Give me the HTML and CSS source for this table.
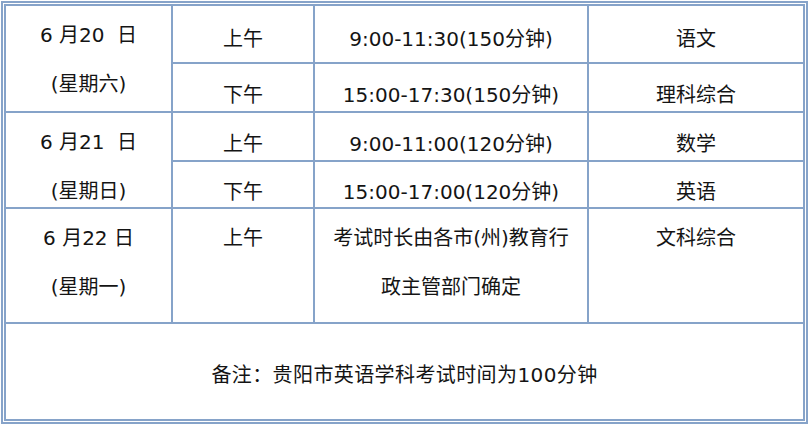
FILE: index.html
```html
<!DOCTYPE html>
<html lang="zh-CN">
<head>
<meta charset="utf-8">
<title>考试时间安排</title>
<link rel="stylesheet" href="styles.css">
</head>
<body>
<div class="frame">
  <div class="grid">
    <div class="cell stack span2"><div>6 月20&nbsp; 日</div><div>(星期六)</div></div>
    <div class="cell mid first">上午</div>
    <div class="cell mid first">9:00-11:30(150分钟)</div>
    <div class="cell mid first">语文</div>
    <div class="cell mid">下午</div>
    <div class="cell mid">15:00-17:30(150分钟)</div>
    <div class="cell mid">理科综合</div>

    <div class="cell stack span2"><div>6 月21&nbsp; 日</div><div>(星期日)</div></div>
    <div class="cell mid">上午</div>
    <div class="cell mid">9:00-11:00(120分钟)</div>
    <div class="cell mid">数学</div>
    <div class="cell mid">下午</div>
    <div class="cell mid">15:00-17:00(120分钟)</div>
    <div class="cell mid">英语</div>

    <div class="cell stack"><div>6 月22 日</div><div>(星期一)</div></div>
    <div class="cell stack"><div>上午</div></div>
    <div class="cell stack"><div>考试时长由各市(州)教育行</div><div>政主管部门确定</div></div>
    <div class="cell stack"><div>文科综合</div></div>

    <div class="cell note">备注：贵阳市英语学科考试时间为100分钟</div>
  </div>
</div>
</body>
</html>
```

FILE: styles.css
```css
html, body {
  margin: 0;
  padding: 0;
  background: #ffffff;
}

body {
  font-family: "DejaVu Sans", "Noto Sans CJK SC", sans-serif;
  font-size: 20px;
  color: #141414;
}

.frame {
  margin: 1px 2px 1px 1px;
  border: 5px double #86a3c9;
}

.grid {
  display: grid;
  grid-template-columns: 165px 140px 272px 214px;
  grid-template-rows: 56px 47px 47px 45px 113px 95px;
  gap: 2px;
  background: #86a3c9;
}

.cell {
  background: #ffffff;
  text-align: center;
  white-space: nowrap;
}

.span2 {
  grid-row: span 2;
}

.mid {
  display: flex;
  align-items: center;
  justify-content: center;
  padding-top: 12px;
  box-sizing: border-box;
}

.mid.first {
  padding-top: 6px;
}

.stack {
  padding-top: 5px;
  line-height: 49px;
}

.note {
  grid-column: 1 / -1;
  display: flex;
  align-items: center;
  justify-content: center;
  padding-top: 3px;
  box-sizing: border-box;
  letter-spacing: 0.4px;
}
```
